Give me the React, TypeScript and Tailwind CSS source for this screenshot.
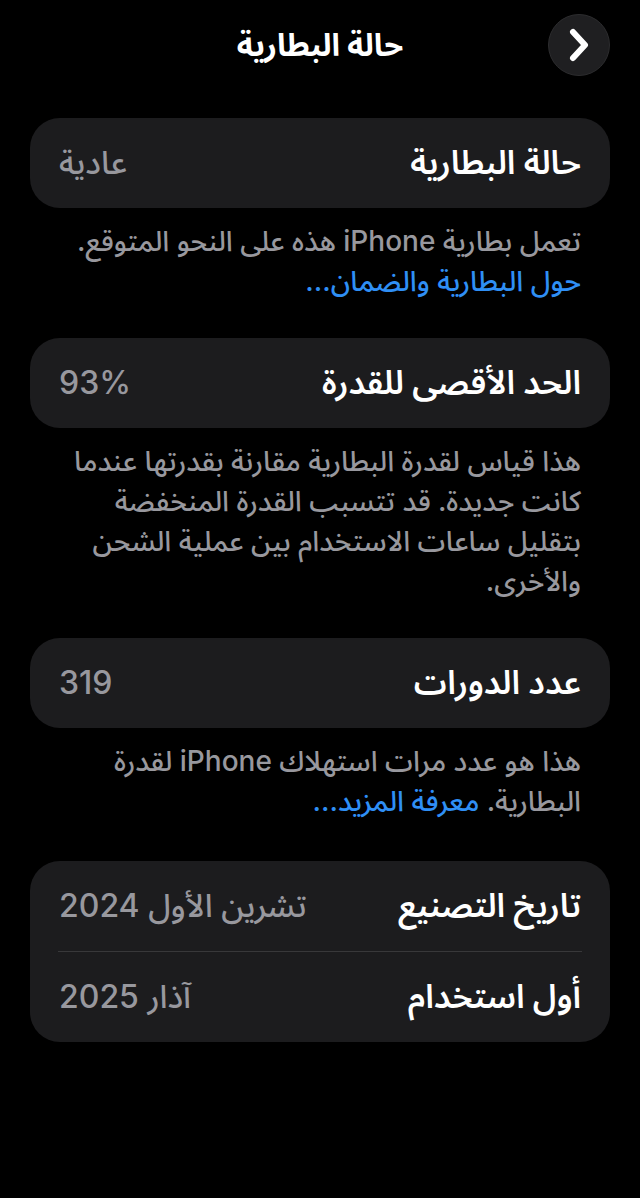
import React from 'react';

const font = {
  fontFamily: 'Inter, "Noto Sans Arabic", "DejaVu Sans", sans-serif',
};

type RowProps = { label: string; value: string };

const Row: React.FC<RowProps> = ({ label, value }) => (
  <div className="flex h-[90px] items-center justify-between px-[29px]">
    <span className="text-[33px] font-semibold text-white">{label}</span>
    <span className="text-[32px] font-medium text-[#98989e]">{value}</span>
  </div>
);

const Footer: React.FC<{ children: React.ReactNode }> = ({ children }) => (
  <div className="whitespace-nowrap pb-[37px] pl-[20px] pr-[59px] pt-[13px] text-[28px] font-medium leading-[40px] text-[#98989e]">
    {children}
  </div>
);

const Link: React.FC<{ children: React.ReactNode }> = ({ children }) => (
  <span className="font-medium text-[#2f8ff5]">{children}</span>
);

export default function App() {
  return (
    <div dir="rtl" className="min-h-[1198px] w-[640px] overflow-hidden bg-black" style={font}>
      <div className="grid h-[118px] grid-cols-[1fr_auto_1fr] items-start pt-[14px]">
        <div className="flex justify-start pr-[30px]">
          <button className="flex h-[62px] w-[62px] items-center justify-center rounded-full border border-[#2c2c2e] bg-[#1f1f21]">
            <svg width="30" height="38" viewBox="0 0 30 38" fill="none" className="ml-[-2px]">
              <path
                d="M10 6 L22 19 L10 32"
                stroke="white"
                strokeWidth="6"
                strokeLinecap="round"
                strokeLinejoin="round"
              />
            </svg>
          </button>
        </div>
        <h1 className="mt-[8px] text-[31px] font-bold text-white">حالة البطارية</h1>
        <div />
      </div>

      <div className="mx-[30px] rounded-[30px] bg-[#1c1c1e]">
        <Row label="حالة البطارية" value="عادية" />
      </div>
      <Footer>
        تعمل بطارية iPhone هذه على النحو المتوقع.
        <br />
        <Link>حول البطارية والضمان...</Link>
      </Footer>

      <div className="mx-[30px] rounded-[30px] bg-[#1c1c1e]">
        <Row label="الحد الأقصى للقدرة" value="93%" />
      </div>
      <Footer>
        هذا قياس لقدرة البطارية مقارنة بقدرتها عندما
        <br />
        كانت جديدة. قد تتسبب القدرة المنخفضة
        <br />
        بتقليل ساعات الاستخدام بين عملية الشحن
        <br />
        والأخرى.
      </Footer>

      <div className="mx-[30px] rounded-[30px] bg-[#1c1c1e]">
        <Row label="عدد الدورات" value="319" />
      </div>
      <Footer>
        هذا هو عدد مرات استهلاك iPhone لقدرة
        <br />
        البطارية. <Link>معرفة المزيد...</Link>
      </Footer>

      <div className="mx-[30px] mt-[3px] rounded-[30px] bg-[#1c1c1e]">
        <Row label="تاريخ التصنيع" value="تشرين الأول 2024" />
        <div className="mx-[28px] h-px bg-[#38383a]" />
        <Row label="أول استخدام" value="آذار 2025" />
      </div>
    </div>
  );
}
